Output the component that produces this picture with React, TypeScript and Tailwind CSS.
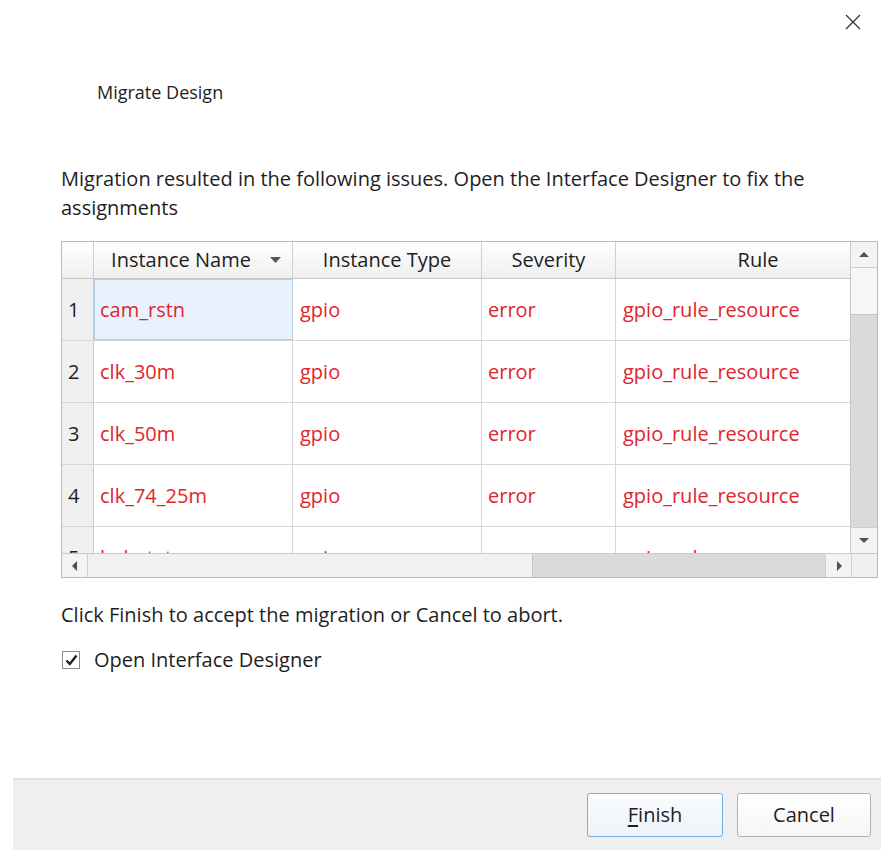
import React from 'react';

type Issue = { name: string; type: string; severity: string; rule: string };

const issues: Issue[] = [
  { name: 'cam_rstn', type: 'gpio', severity: 'error', rule: 'gpio_rule_resource' },
  { name: 'clk_30m', type: 'gpio', severity: 'error', rule: 'gpio_rule_resource' },
  { name: 'clk_50m', type: 'gpio', severity: 'error', rule: 'gpio_rule_resource' },
  { name: 'clk_74_25m', type: 'gpio', severity: 'error', rule: 'gpio_rule_resource' },
  { name: 'led_status', type: 'gpio', severity: 'error', rule: 'gpio_rule_resource' },
];

const font = { fontFamily: '"Open Sans", "Noto Sans", sans-serif' };

function Arrow({ dir }: { dir: 'up' | 'down' | 'left' | 'right' }) {
  const pts = {
    up: '1,7 6,2 11,7',
    down: '1,2 6,7 11,2',
    left: '7,1 2,6 7,11',
    right: '3,1 8,6 3,11',
  }[dir];
  const vertical = dir === 'up' || dir === 'down';
  return (
    <svg width={vertical ? 12 : 10} height={vertical ? 9 : 12} viewBox={vertical ? '0 0 12 9' : '0 0 10 12'}>
      <polygon points={pts} fill="#505050" />
    </svg>
  );
}

export default function App() {
  return (
    <div className="w-[881px] h-[850px] bg-white flex flex-col text-[#1e1e1e] overflow-hidden" style={font}>
      {/* title bar */}
      <div className="flex justify-end pt-[14px] pr-[20px] h-[80px]">
        <svg width="16" height="16" viewBox="0 0 16 16">
          <path d="M1 1 L15 15 M15 1 L1 15" stroke="#333" strokeWidth="1.3" fill="none" />
        </svg>
      </div>
      <div className="pl-[97px] text-[18px] leading-[24px]">Migrate Design</div>

      <div className="pl-[61px] pr-[60px] mt-[60px] text-[20px] leading-[29px]">
        Migration resulted in the following issues. Open the Interface Designer to fix the assignments
      </div>

      {/* issues table */}
      <div className="ml-[61px] mt-[19px] w-[817px] h-[337px] border border-[#b9b9b9] flex flex-col">
        <div className="flex h-[311px]">
          <div className="w-[789px] overflow-hidden flex flex-col">
            <div className="flex h-[37px] shrink-0 bg-gradient-to-b from-white to-[#efefef] border-b border-[#c6c6c6] text-[20px]">
              <div className="w-[32px] shrink-0 border-r border-[#d0d0d0]" />
              <div className="w-[199px] shrink-0 border-r border-[#d0d0d0] relative flex items-center justify-center pr-[24px]">
                Instance Name
                <svg className="absolute right-[11px] top-[15px]" width="11" height="7" viewBox="0 0 11 7">
                  <polygon points="0,0 11,0 5.5,6" fill="#555" />
                </svg>
              </div>
              <div className="w-[189px] shrink-0 border-r border-[#d0d0d0] flex items-center justify-center">Instance Type</div>
              <div className="w-[134px] shrink-0 border-r border-[#d0d0d0] flex items-center justify-center">Severity</div>
              <div className="w-[284px] shrink-0 flex items-center justify-center">Rule</div>
            </div>
            {issues.map((it, i) => (
              <div key={it.name} className="flex h-[62px] shrink-0 border-b border-[#d6d6d6] text-[20px] text-[#e0252d]">
                <div className="w-[32px] shrink-0 bg-[#f0f0f0] border-r border-[#c9c9c9] flex items-center pl-[6px] text-[#1e1e1e]">
                  {i + 1}
                </div>
                <div
                  className={
                    i === 0
                      ? 'w-[199px] shrink-0 bg-[#e8f2fc] border border-[#b4cde6] flex items-center pl-[5px]'
                      : 'w-[199px] shrink-0 border-r border-[#d6d6d6] flex items-center pl-[6px]'
                  }
                >
                  {it.name}
                </div>
                <div className="w-[189px] shrink-0 border-r border-[#d6d6d6] flex items-center pl-[7px]">{it.type}</div>
                <div className="w-[134px] shrink-0 border-r border-[#d6d6d6] flex items-center pl-[6px]">{it.severity}</div>
                <div className="w-[284px] shrink-0 flex items-center pl-[7px]">{it.rule}</div>
              </div>
            ))}
          </div>
          {/* vertical scrollbar */}
          <div className="w-[27px] shrink-0 flex flex-col border-l border-[#c9c9c9]">
            <div className="h-[26px] bg-[#f3f3f3] border-b border-[#cfcfcf] flex items-center justify-center">
              <Arrow dir="up" />
            </div>
            <div className="h-[47px] bg-[#f6f6f6] border-b border-[#c4c4c4]" />
            <div className="flex-1 bg-[#dadada]" />
            <div className="h-[26px] bg-[#f3f3f3] border-t border-[#cfcfcf] flex items-center justify-center">
              <Arrow dir="down" />
            </div>
          </div>
        </div>
        {/* horizontal scrollbar */}
        <div className="flex h-[25px] border-t border-[#c9c9c9]">
          <div className="w-[26px] bg-[#f3f3f3] border-r border-[#cfcfcf] flex items-center justify-center">
            <Arrow dir="left" />
          </div>
          <div className="w-[445px] bg-[#f1f1f1] border-r border-[#c4c4c4]" />
          <div className="flex-1 bg-[#dadada]" />
          <div className="w-[26px] bg-[#f3f3f3] border-l border-[#cfcfcf] flex items-center justify-center">
            <Arrow dir="right" />
          </div>
          <div className="w-[26px] bg-[#f0f0f0] border-l border-[#cfcfcf]" />
        </div>
      </div>

      <div className="pl-[61px] mt-[22px] text-[20px] leading-[29px]">
        Click Finish to accept the migration or Cancel to abort.
      </div>

      <label className="ml-[62px] mt-[19px] flex items-center gap-[14px] text-[20px] leading-[24px]">
        <span className="w-[18px] h-[18px] border border-[#8c8c8c] bg-white flex items-center justify-center">
          <svg width="13" height="12" viewBox="0 0 13 12">
            <path d="M1.5 6.5 L4.8 10 L11.5 1.5" stroke="#1e1e1e" strokeWidth="2.4" fill="none" />
          </svg>
        </span>
        Open Interface Designer
      </label>

      {/* button bar */}
      <div className="mt-auto ml-[13px] h-[72px] bg-[#efefef] border-t-2 border-[#e0e0e0] flex items-center justify-end gap-[14px] pr-[10px]">
        <button className="w-[136px] h-[44px] rounded-[3px] border border-[#7aaee0] bg-gradient-to-b from-[#fafcfe] to-[#eef3f8] text-[20px]">
          <span className="underline underline-offset-[3px]">F</span>inish
        </button>
        <button className="w-[134px] h-[44px] rounded-[3px] border border-[#b2b2b2] bg-gradient-to-b from-white to-[#f6f6f6] text-[20px]">
          Cancel
        </button>
      </div>
    </div>
  );
}
